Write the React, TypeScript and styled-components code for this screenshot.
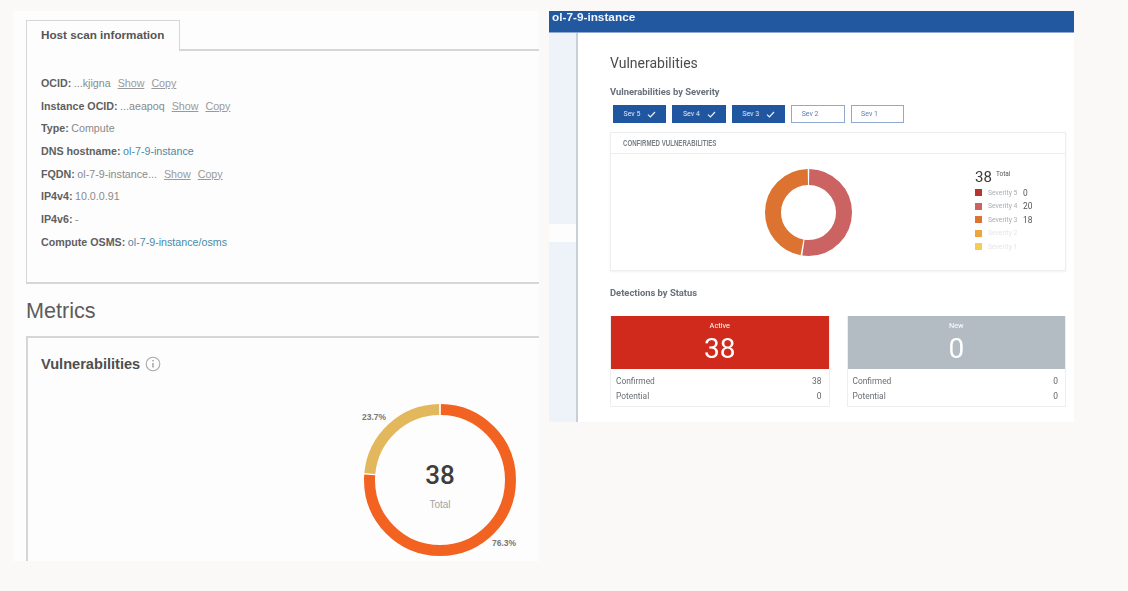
import React from "react";
import styled, { createGlobalStyle } from "styled-components";

const Global = createGlobalStyle`
  html, body { margin: 0; padding: 0; background: #faf9f7; }
  body { width: 1128px; height: 591px; overflow: hidden; font-family: "Liberation Sans", Arial, sans-serif; }
  * { box-sizing: border-box; }
`;

const Page = styled.div`
  display: flex;
  align-items: flex-start;
  gap: 10px;
  width: 1128px;
  height: 591px;
  padding: 11px 0 0 13px;
  filter: blur(0.45px);
`;

/* Left screenshot */
const LeftPanel = styled.section`
  width: 526px;
  height: 550px;
  flex: none;
  padding: 9px 0 0 13px;
  background: #fdfdfd;
  overflow: hidden;
`;
const HostCard = styled.div`
  height: 264px;
  border-left: 1px solid #d6d6d6;
  border-bottom: 2px solid #d6d6d6;
`;
const TabRow = styled.div`
  display: flex;
  height: 31px;
`;
const Tab = styled.div`
  width: 153px;
  padding: 7px 0 0 14px;
  border-top: 1px solid #d6d6d6;
  border-right: 1px solid #d6d6d6;
  font-size: 11.7px;
  line-height: 14px;
  font-weight: 700;
  color: #555;
`;
const TabFill = styled.div`
  flex: 1;
  border-bottom: 2px solid #d6d6d6;
`;
const InfoList = styled.div`
  padding: 20.6px 0 0 14px;
`;
const InfoRow = styled.div`
  height: 22.7px;
  display: flex;
  align-items: center;
  font-size: 10.7px;
  color: #8a8a8a;
  white-space: pre;
`;
const Label = styled.b`
  color: #5f5f5f;
  margin-right: 2.5px;
`;
const Action = styled.span`
  margin-left: 7px;
  color: #9a9a9a;
  text-decoration: underline;
`;
const InfoLink = styled.span`
  color: #4b8aa6;
`;
const MetricsTitle = styled.h2`
  margin: 13px 0 13px;
  height: 26px;
  font-size: 21.6px;
  line-height: 27px;
  font-weight: 400;
  color: #5c5c5c;
`;
const MetricsCard = styled.div`
  height: 240px;
  border-left: 2px solid #d6d6d6;
  border-top: 2px solid #d6d6d6;
  padding: 17px 0 0 13px;
`;
const MetricsHead = styled.div`
  display: flex;
  align-items: center;
  gap: 5px;
  height: 18px;
  font-size: 14.6px;
  font-weight: 700;
  color: #4f4f4f;
`;
const ChartWrap = styled.div`
  position: relative;
  width: 152px;
  height: 152px;
  margin: 31px 0 0 323px;
`;
const CenterBox = styled.div`
  position: absolute;
  inset: 0;
  display: flex;
  flex-direction: column;
  align-items: center;
  padding-top: 56px;
`;
const CenterNum = styled.div`
  font-family: Roboto, sans-serif;
  font-size: 26px;
  line-height: 30px;
  font-weight: 500;
  color: #3d3d3d;
`;
const CenterSub = styled.div`
  margin-top: 9px;
  font-size: 10px;
  line-height: 12px;
  color: #a3a3a3;
`;
const Pct = styled.span<{ $x: number; $y: number }>`
  position: absolute;
  left: ${(p) => p.$x}px;
  top: ${(p) => p.$y}px;
  font-size: 8.5px;
  line-height: 10px;
  font-weight: 700;
  color: #777;
`;

/* Right screenshot */
const RightPanel = styled.section`
  width: 525px;
  height: 411px;
  flex: none;
  display: flex;
  flex-direction: column;
  background: #fff;
  font-family: Roboto, "Liberation Sans", sans-serif;
`;
const Banner = styled.header`
  height: 22px;
  flex: none;
  padding-left: 3px;
  background: #22589f;
  border-bottom: 1px solid #8eaad0;
  color: #f2f5fa;
  font-family: "Liberation Sans", sans-serif;
  font-size: 11.8px;
  line-height: 12px;
  font-weight: 700;
`;
const Body = styled.div`
  flex: 1;
  display: flex;
`;
const Rail = styled.div`
  width: 29px;
  flex: none;
  display: flex;
  flex-direction: column;
  border-right: 2px solid #c9cfd8;
`;
const RailTop = styled.div`
  height: 191px;
  background: #eef2f9;
`;
const RailGap = styled.div`
  height: 18px;
  background: #fdfdfe;
`;
const RailBottom = styled.div`
  flex: 1;
  background: #eef2f9;
`;
const Content = styled.div`
  flex: 1;
  padding: 21px 8px 0 32px;
`;
const PageTitle = styled.h1`
  margin: 0;
  height: 18px;
  font-size: 14px;
  line-height: 18px;
  font-weight: 400;
  color: #4c4c4c;
`;
const SectionTitle = styled.h3`
  margin: 0;
  height: 12px;
  font-size: 9.4px;
  line-height: 12px;
  font-weight: 700;
  color: #68707b;
`;
const SevTitle = styled(SectionTitle)`
  margin-top: 14px;
`;
const SevRow = styled.div`
  display: flex;
  gap: 6px;
  margin: 7px 0 9px 3px;
`;
const SevButton = styled.div<{ $on?: boolean }>`
  width: 53.4px;
  height: 18px;
  display: flex;
  align-items: center;
  gap: 7px;
  padding-left: 9.5px;
  font-size: 7px;
  background: ${(p) => (p.$on ? "#1f569f" : "#fff")};
  color: ${(p) => (p.$on ? "#dfe8f4" : "#5c7fb0")};
  border: 1px solid ${(p) => (p.$on ? "#1f569f" : "#8fa9cf")};
`;
const ConfirmedCard = styled.div`
  height: 139px;
  border: 1px solid #eceef0;
  box-shadow: 0 1px 2px rgba(0, 0, 0, 0.06);
`;
const ConfirmedHead = styled.div`
  height: 21px;
  padding-left: 12px;
  display: flex;
  align-items: center;
  border-bottom: 1px solid #eceef0;
`;
const ConfirmedText = styled.span`
  display: inline-block;
  font-family: "Liberation Sans", sans-serif;
  font-size: 8.4px;
  font-weight: 700;
  color: #7a8088;
  white-space: nowrap;
  transform: scaleX(0.73);
  transform-origin: left center;
`;
const ConfirmedBody = styled.div`
  display: flex;
  height: 116px;
`;
const DonutSlot = styled.div`
  width: 364px;
  padding: 15px 0 0 154px;
`;
const Legend = styled.div`
  padding-top: 15px;
`;
const LegendTotal = styled.div`
  display: flex;
  align-items: flex-start;
  gap: 4px;
  height: 17px;
  font-size: 15px;
  line-height: 17px;
  color: #3a3a3a;
`;
const TotalTag = styled.span`
  font-size: 6.5px;
  line-height: 10px;
  color: #555;
`;
const LegendRow = styled.div`
  display: flex;
  align-items: center;
  height: 13.5px;
  font-size: 6.8px;
`;
const Swatch = styled.i<{ $c: string }>`
  width: 7px;
  height: 7px;
  margin-right: 6px;
  background: ${(p) => p.$c};
`;
const LegendName = styled.span<{ $dim?: boolean }>`
  width: 35px;
  color: ${(p) => (p.$dim ? "#e6e6e8" : "#a9adb2")};
`;
const LegendValue = styled.span`
  font-size: 8.4px;
  color: #555;
`;
const StatusTitle = styled(SectionTitle)`
  margin-top: 16px;
`;
const StatusRow = styled.div`
  display: flex;
  gap: 17px;
  margin-top: 17px;
`;
const StatusCard = styled.div`
  flex: 1;
  height: 91px;
  border: 1px solid #eceef0;
  border-top: 0;
`;
const StatusHead = styled.div<{ $c: string }>`
  height: 53px;
  display: flex;
  flex-direction: column;
  align-items: center;
  padding-top: 5px;
  background: ${(p) => p.$c};
  color: #fff;
`;
const StatusName = styled.div`
  font-size: 7.4px;
  line-height: 10px;
`;
const StatusNum = styled.div`
  font-size: 28px;
  line-height: 33px;
  margin-top: 1px;
`;
const StatusLines = styled.div`
  padding: 4px 7px 0 5px;
`;
const StatusLine = styled.div`
  display: flex;
  justify-content: space-between;
  align-items: center;
  height: 15.5px;
  font-size: 8.4px;
  color: #6b6f74;
`;
const StatusValue = styled.span`
  font-size: 8.4px;
  color: #666;
`;

const Ring = ({ size, stroke, parts }: { size: number; stroke: number; parts: { c: string; from: number; len: number }[] }) => {
  const r = (size - stroke) / 2;
  return (
    <svg width={size} height={size} viewBox={`0 0 ${size} ${size}`} style={{ display: "block" }}>
      {parts.map((p) => (
        <circle
          key={p.c}
          cx={size / 2}
          cy={size / 2}
          r={r}
          fill="none"
          stroke={p.c}
          strokeWidth={stroke}
          pathLength={100}
          strokeDasharray={`${p.len} ${100 - p.len}`}
          strokeDashoffset={-p.from}
          transform={`rotate(-90 ${size / 2} ${size / 2})`}
        />
      ))}
    </svg>
  );
};

const InfoIcon = () => (
  <svg width="16" height="16" viewBox="0 0 16 16">
    <circle cx="8" cy="8" r="6.8" fill="none" stroke="#a8a8a8" strokeWidth="1.1" />
    <path d="M8 7v4.4" stroke="#8c8c8c" strokeWidth="1.2" />
    <circle cx="8" cy="4.8" r="0.8" fill="#8c8c8c" />
  </svg>
);

const Check = () => (
  <svg width="9" height="7" viewBox="0 0 9 7">
    <path d="M1 3.6 3.4 6 8 1" fill="none" stroke="#eef3fa" strokeWidth="1.2" />
  </svg>
);

const severities = [
  { name: "Severity 5", c: "#b5362f", v: "0" },
  { name: "Severity 4", c: "#cb6362", v: "20" },
  { name: "Severity 3", c: "#dc7330", v: "18" },
  { name: "Severity 2", c: "#eea63c", dim: true },
  { name: "Severity 1", c: "#f5cd56", dim: true },
];

const statuses = [
  { name: "Active", c: "#cf2a1b", n: "38", conf: "38" },
  { name: "New", c: "#b2bcc2", n: "0", conf: "0" },
];

export default function App() {
  return (
    <Page>
      <Global />
      <LeftPanel>
        <HostCard>
          <TabRow>
            <Tab>Host scan information</Tab>
            <TabFill />
          </TabRow>
          <InfoList>
            <InfoRow><Label>OCID:</Label>...kjigna<Action>Show</Action><Action>Copy</Action></InfoRow>
            <InfoRow><Label>Instance OCID:</Label>...aeapoq<Action>Show</Action><Action>Copy</Action></InfoRow>
            <InfoRow><Label>Type:</Label>Compute</InfoRow>
            <InfoRow><Label>DNS hostname:</Label><InfoLink>ol-7-9-instance</InfoLink></InfoRow>
            <InfoRow><Label>FQDN:</Label>ol-7-9-instance...<Action>Show</Action><Action>Copy</Action></InfoRow>
            <InfoRow><Label>IP4v4:</Label>10.0.0.91</InfoRow>
            <InfoRow><Label>IP4v6:</Label>-</InfoRow>
            <InfoRow><Label>Compute OSMS:</Label><InfoLink>ol-7-9-instance/osms</InfoLink></InfoRow>
          </InfoList>
        </HostCard>
        <MetricsTitle>Metrics</MetricsTitle>
        <MetricsCard>
          <MetricsHead>Vulnerabilities <InfoIcon /></MetricsHead>
          <ChartWrap>
            <Ring
              size={152}
              stroke={11}
              parts={[
                { c: "#f26322", from: 0.2, len: 76.0 },
                { c: "#e3b85c", from: 76.5, len: 23.3 },
              ]}
            />
            <CenterBox>
              <CenterNum>38</CenterNum>
              <CenterSub>Total</CenterSub>
            </CenterBox>
            <Pct $x={-2} $y={8}>23.7%</Pct>
            <Pct $x={128} $y={134}>76.3%</Pct>
          </ChartWrap>
        </MetricsCard>
      </LeftPanel>
      <RightPanel>
        <Banner>ol-7-9-instance</Banner>
        <Body>
          <Rail>
            <RailTop />
            <RailGap />
            <RailBottom />
          </Rail>
          <Content>
            <PageTitle>Vulnerabilities</PageTitle>
            <SevTitle>Vulnerabilities by Severity</SevTitle>
            <SevRow>
              <SevButton $on>Sev 5 <Check /></SevButton>
              <SevButton $on>Sev 4 <Check /></SevButton>
              <SevButton $on>Sev 3 <Check /></SevButton>
              <SevButton>Sev 2</SevButton>
              <SevButton>Sev 1</SevButton>
            </SevRow>
            <ConfirmedCard>
              <ConfirmedHead><ConfirmedText>CONFIRMED VULNERABILITIES</ConfirmedText></ConfirmedHead>
              <ConfirmedBody>
                <DonutSlot>
                  <Ring
                    size={87}
                    stroke={16}
                    parts={[
                      { c: "#cb6362", from: 0.3, len: 52 },
                      { c: "#dc7330", from: 52.9, len: 46.8 },
                    ]}
                  />
                </DonutSlot>
                <Legend>
                  <LegendTotal>38 <TotalTag>Total</TotalTag></LegendTotal>
                  {severities.map((s) => (
                    <LegendRow key={s.name}>
                      <Swatch $c={s.c} />
                      <LegendName $dim={s.dim}>{s.name}</LegendName>
                      <LegendValue>{s.v}</LegendValue>
                    </LegendRow>
                  ))}
                </Legend>
              </ConfirmedBody>
            </ConfirmedCard>
            <StatusTitle>Detections by Status</StatusTitle>
            <StatusRow>
              {statuses.map((s) => (
                <StatusCard key={s.name}>
                  <StatusHead $c={s.c}>
                    <StatusName>{s.name}</StatusName>
                    <StatusNum>{s.n}</StatusNum>
                  </StatusHead>
                  <StatusLines>
                    <StatusLine>Confirmed <StatusValue>{s.conf}</StatusValue></StatusLine>
                    <StatusLine>Potential <StatusValue>0</StatusValue></StatusLine>
                  </StatusLines>
                </StatusCard>
              ))}
            </StatusRow>
          </Content>
        </Body>
      </RightPanel>
    </Page>
  );
}
